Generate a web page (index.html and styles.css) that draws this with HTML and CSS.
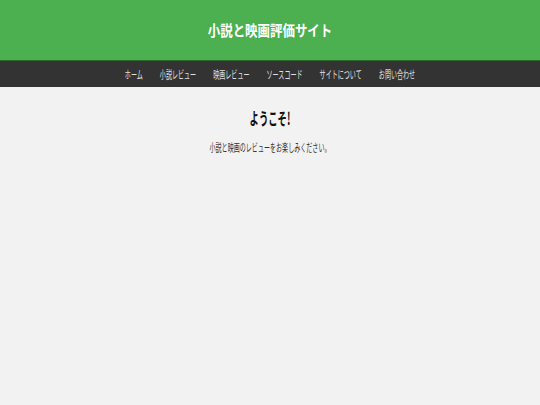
FILE: index.html
```html
<!DOCTYPE html>
<html lang="ja">
<head>
<meta charset="utf-8">
<title>小説と映画評価サイト</title>
<link rel="stylesheet" href="styles.css">
</head>
<body>
<header class="site-header">
  <h1 class="site-title">小説と映画評価サイト</h1>
</header>
<nav class="site-nav">
  <ul class="nav-list">
    <li><a href="#">ホーム</a></li>
    <li><a href="#">小説レビュー</a></li>
    <li><a href="#">映画レビュー</a></li>
    <li><a href="#">ソースコード</a></li>
    <li><a href="#">サイトについて</a></li>
    <li><a href="#">お問い合わせ</a></li>
  </ul>
</nav>
<main class="content">
  <h2 class="welcome">ようこそ!</h2>
  <p class="lead">小説と映画のレビューをお楽しみください。</p>
</main>
</body>
</html>
```

FILE: styles.css
```css
html, body {
  margin: 0;
  padding: 0;
}
body {
  background: #f2f2f2;
  font-family: "Noto Sans CJK JP", "Noto Sans", sans-serif;
  color: #333;
  min-height: 405px;
}
.site-header {
  background: #4caf50;
  height: 60px;
  display: flex;
  align-items: center;
  justify-content: center;
}
.site-title {
  margin: 0;
  width: 100%;
  text-align: center;
  color: #fff;
  font-size: 15px;
  font-weight: 700;
  line-height: 20px;
  transform: scaleX(0.83);
}
.site-nav {
  background: #333;
  height: 27px;
  display: flex;
  align-items: center;
  box-shadow: inset 0 1px 0 #2a6b2c;
}
.nav-list {
  list-style: none;
  margin: 0;
  padding: 0;
  width: 100%;
  display: flex;
  justify-content: center;
  gap: 31px;
  transform: scaleX(0.55);
}
.nav-list a {
  color: #e0e0e0;
  text-decoration: none;
  font-size: 11px;
  line-height: 14px;
  display: block;
}
.content {
  padding-top: 20px;
  text-align: center;
}
.welcome {
  margin: 0;
  font-size: 17px;
  font-weight: 700;
  line-height: 21px;
  color: #111;
  transform: scaleX(0.55);
}
.lead {
  margin: 11px 0 0;
  font-size: 11px;
  line-height: 16px;
  color: #333;
  transform: scaleX(0.55);
}
```
